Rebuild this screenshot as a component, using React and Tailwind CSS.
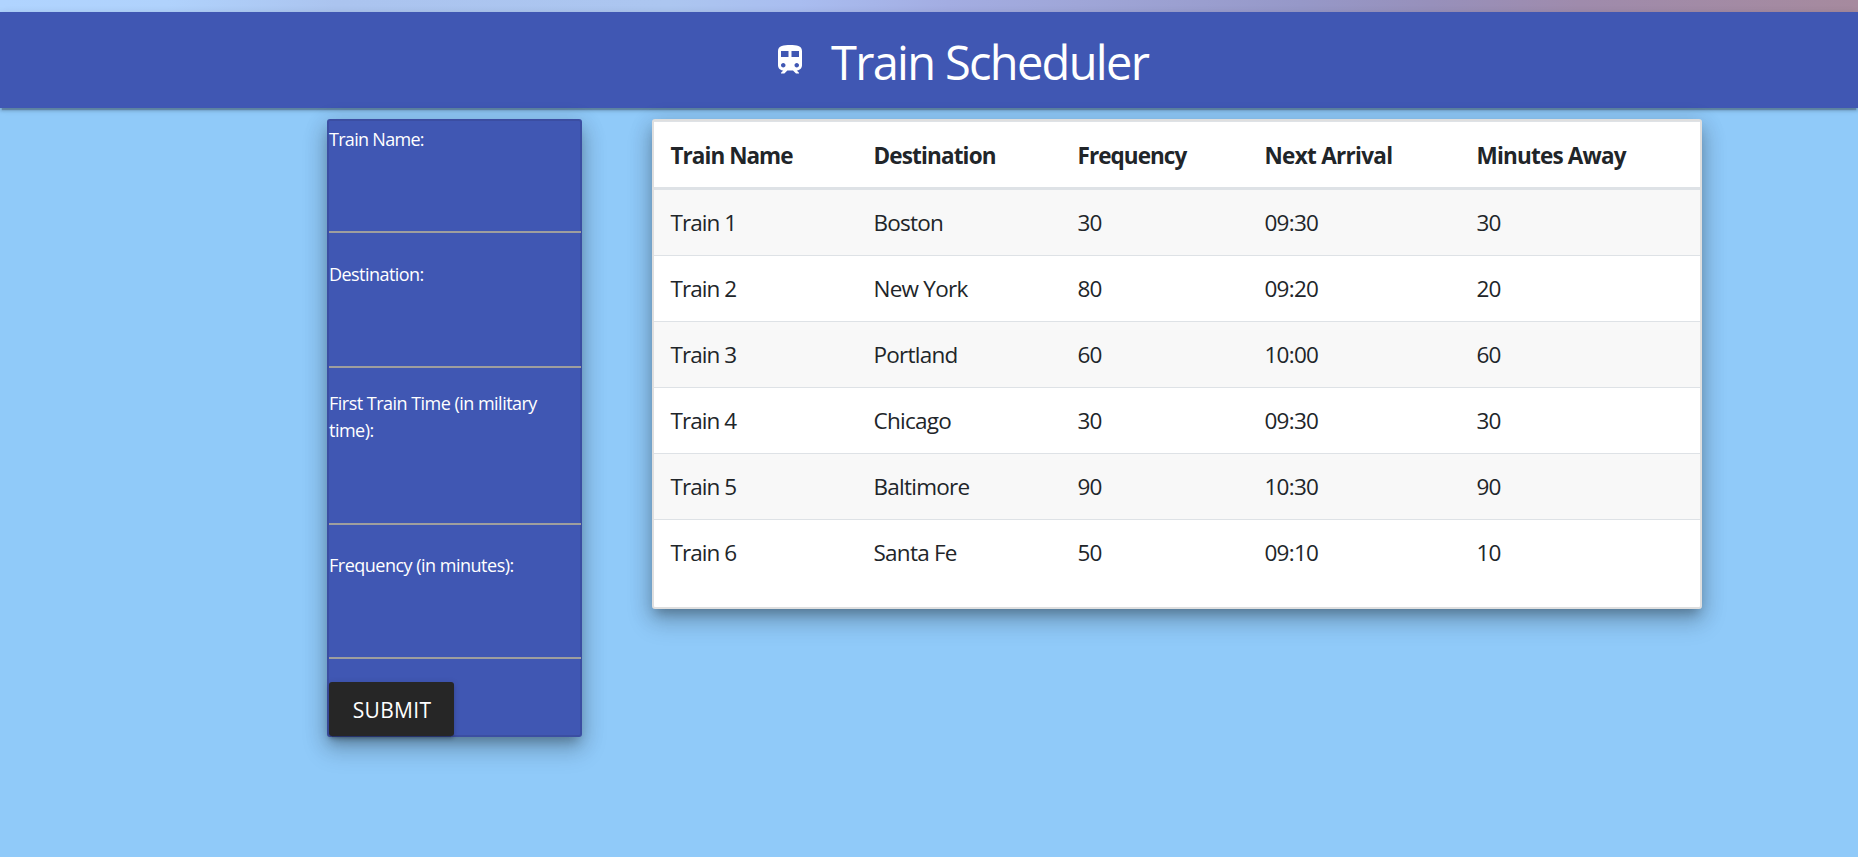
import { MdTrain } from "react-icons/md";

const trains = [
  ["Train 1", "Boston", "30", "09:30", "30"],
  ["Train 2", "New York", "80", "09:20", "20"],
  ["Train 3", "Portland", "60", "10:00", "60"],
  ["Train 4", "Chicago", "30", "09:30", "30"],
  ["Train 5", "Baltimore", "90", "10:30", "90"],
  ["Train 6", "Santa Fe", "50", "09:10", "10"],
];

const columns = [
  ["Train Name", "w-[202px] tracking-[-0.95px]"],
  ["Destination", "w-[204px] tracking-[-0.85px]"],
  ["Frequency", "w-[187px] tracking-[-0.95px]"],
  ["Next Arrival", "w-[212px] tracking-[-0.7px]"],
  ["Minutes Away", "w-[241px] tracking-[-0.8px]"],
];

const cardShadow =
  "shadow-[0_12px_25px_3px_rgba(0,0,0,0.14),0_5px_21px_3px_rgba(0,0,0,0.12),0_8px_11px_-4px_rgba(0,0,0,0.25)]";

function Field({ label, className }) {
  return (
    <label className={`flex w-[252px] shrink-0 flex-col justify-between border-b-2 border-[#9e9e9e] ${className}`}>
      <span className="text-[18px] leading-[27px] text-white">{label}</span>
      <input type="text" className="h-12 w-full bg-transparent text-white outline-none" />
    </label>
  );
}

export default function App() {
  return (
    <div className="flex h-[857px] flex-col overflow-hidden bg-[#90caf9] font-['Open_Sans',sans-serif]">
      <div className="h-3 shrink-0 bg-[linear-gradient(90deg,#b0d4ff_0%,#b0d2fc_9%,#abc4ef_18%,#acc6f0_36%,#a9bdf0_43%,#a3ade2_51%,#9fa6d8_58%,#9698c8_70%,#9790bb_77%,#9f8bac_85%,#a68a9e_100%)]" />
      <header className="flex h-24 shrink-0 bg-[#4057b3] pl-[772px] text-white shadow-[0_3px_3px_0_rgba(0,0,0,0.14),0_1px_7px_0_rgba(0,0,0,0.12),0_4px_1px_-2px_rgba(0,0,0,0.2)]">
        <MdTrain className="mt-[30px] size-9" />
        <h1 className="ml-[23px] mt-[18px] text-[47px] font-normal leading-[64px] tracking-[-1.7px]">Train Scheduler</h1>
      </header>
      <main className="flex items-start pl-[327px] pt-[11px]">
        <form className={`flex h-[618px] w-[255px] flex-col items-start rounded-[3px] border-2 border-[#3b4ea2] bg-[#4057b3] ${cardShadow}`}>
          <Field label="Train Name:" className="mt-[5px] h-[107px] tracking-[-0.7px]" />
          <Field label="Destination:" className="mt-[28px] h-[107px] tracking-[-0.55px]" />
          <Field label="First Train Time (in military time):" className="mt-[22px] h-[135px] tracking-[-0.52px]" />
          <Field label="Frequency (in minutes):" className="mt-[27px] h-[107px] tracking-[-0.5px]" />
          <button
            type="button"
            className="mt-[23px] h-[54px] w-[125px] shrink-0 rounded-[3px] bg-[#262626] pl-px pt-[3px] text-[21px] tracking-[0.3px] text-white shadow-[0_3px_3px_0_rgba(0,0,0,0.14),0_1px_7px_0_rgba(0,0,0,0.12),0_4px_1px_-3px_rgba(0,0,0,0.2)]"
          >
            SUBMIT
          </button>
        </form>
        <section className={`ml-[70px] h-[490px] w-[1050px] rounded-[3px] border-2 border-[#dfdfdf] bg-white ${cardShadow}`}>
          <table className="w-full table-fixed border-separate border-spacing-0 text-left text-[22.5px] leading-[36px] tracking-[-0.75px] text-[#212529]">
            <thead>
              <tr>
                {columns.map(([name, width]) => (
                  <th
                    key={name}
                    className={`h-[69px] border-b-[3px] border-t border-[#dee2e6] p-0 pl-[17.5px] pt-[2px] font-bold first:pl-[16.5px] ${width}`}
                  >
                    {name}
                  </th>
                ))}
              </tr>
            </thead>
            <tbody>
              {trains.map((row) => (
                <tr key={row[0]} className="group odd:bg-[#f8f8f8]">
                  {row.map((cell, j) => (
                    <td
                      key={j}
                      className="h-[66px] border-b border-[#dee2e6] p-0 pl-[17.5px] font-normal first:pl-[16.5px] first:tracking-[-0.95px] group-last:border-transparent"
                    >
                      {cell}
                    </td>
                  ))}
                </tr>
              ))}
            </tbody>
          </table>
        </section>
      </main>
    </div>
  );
}
